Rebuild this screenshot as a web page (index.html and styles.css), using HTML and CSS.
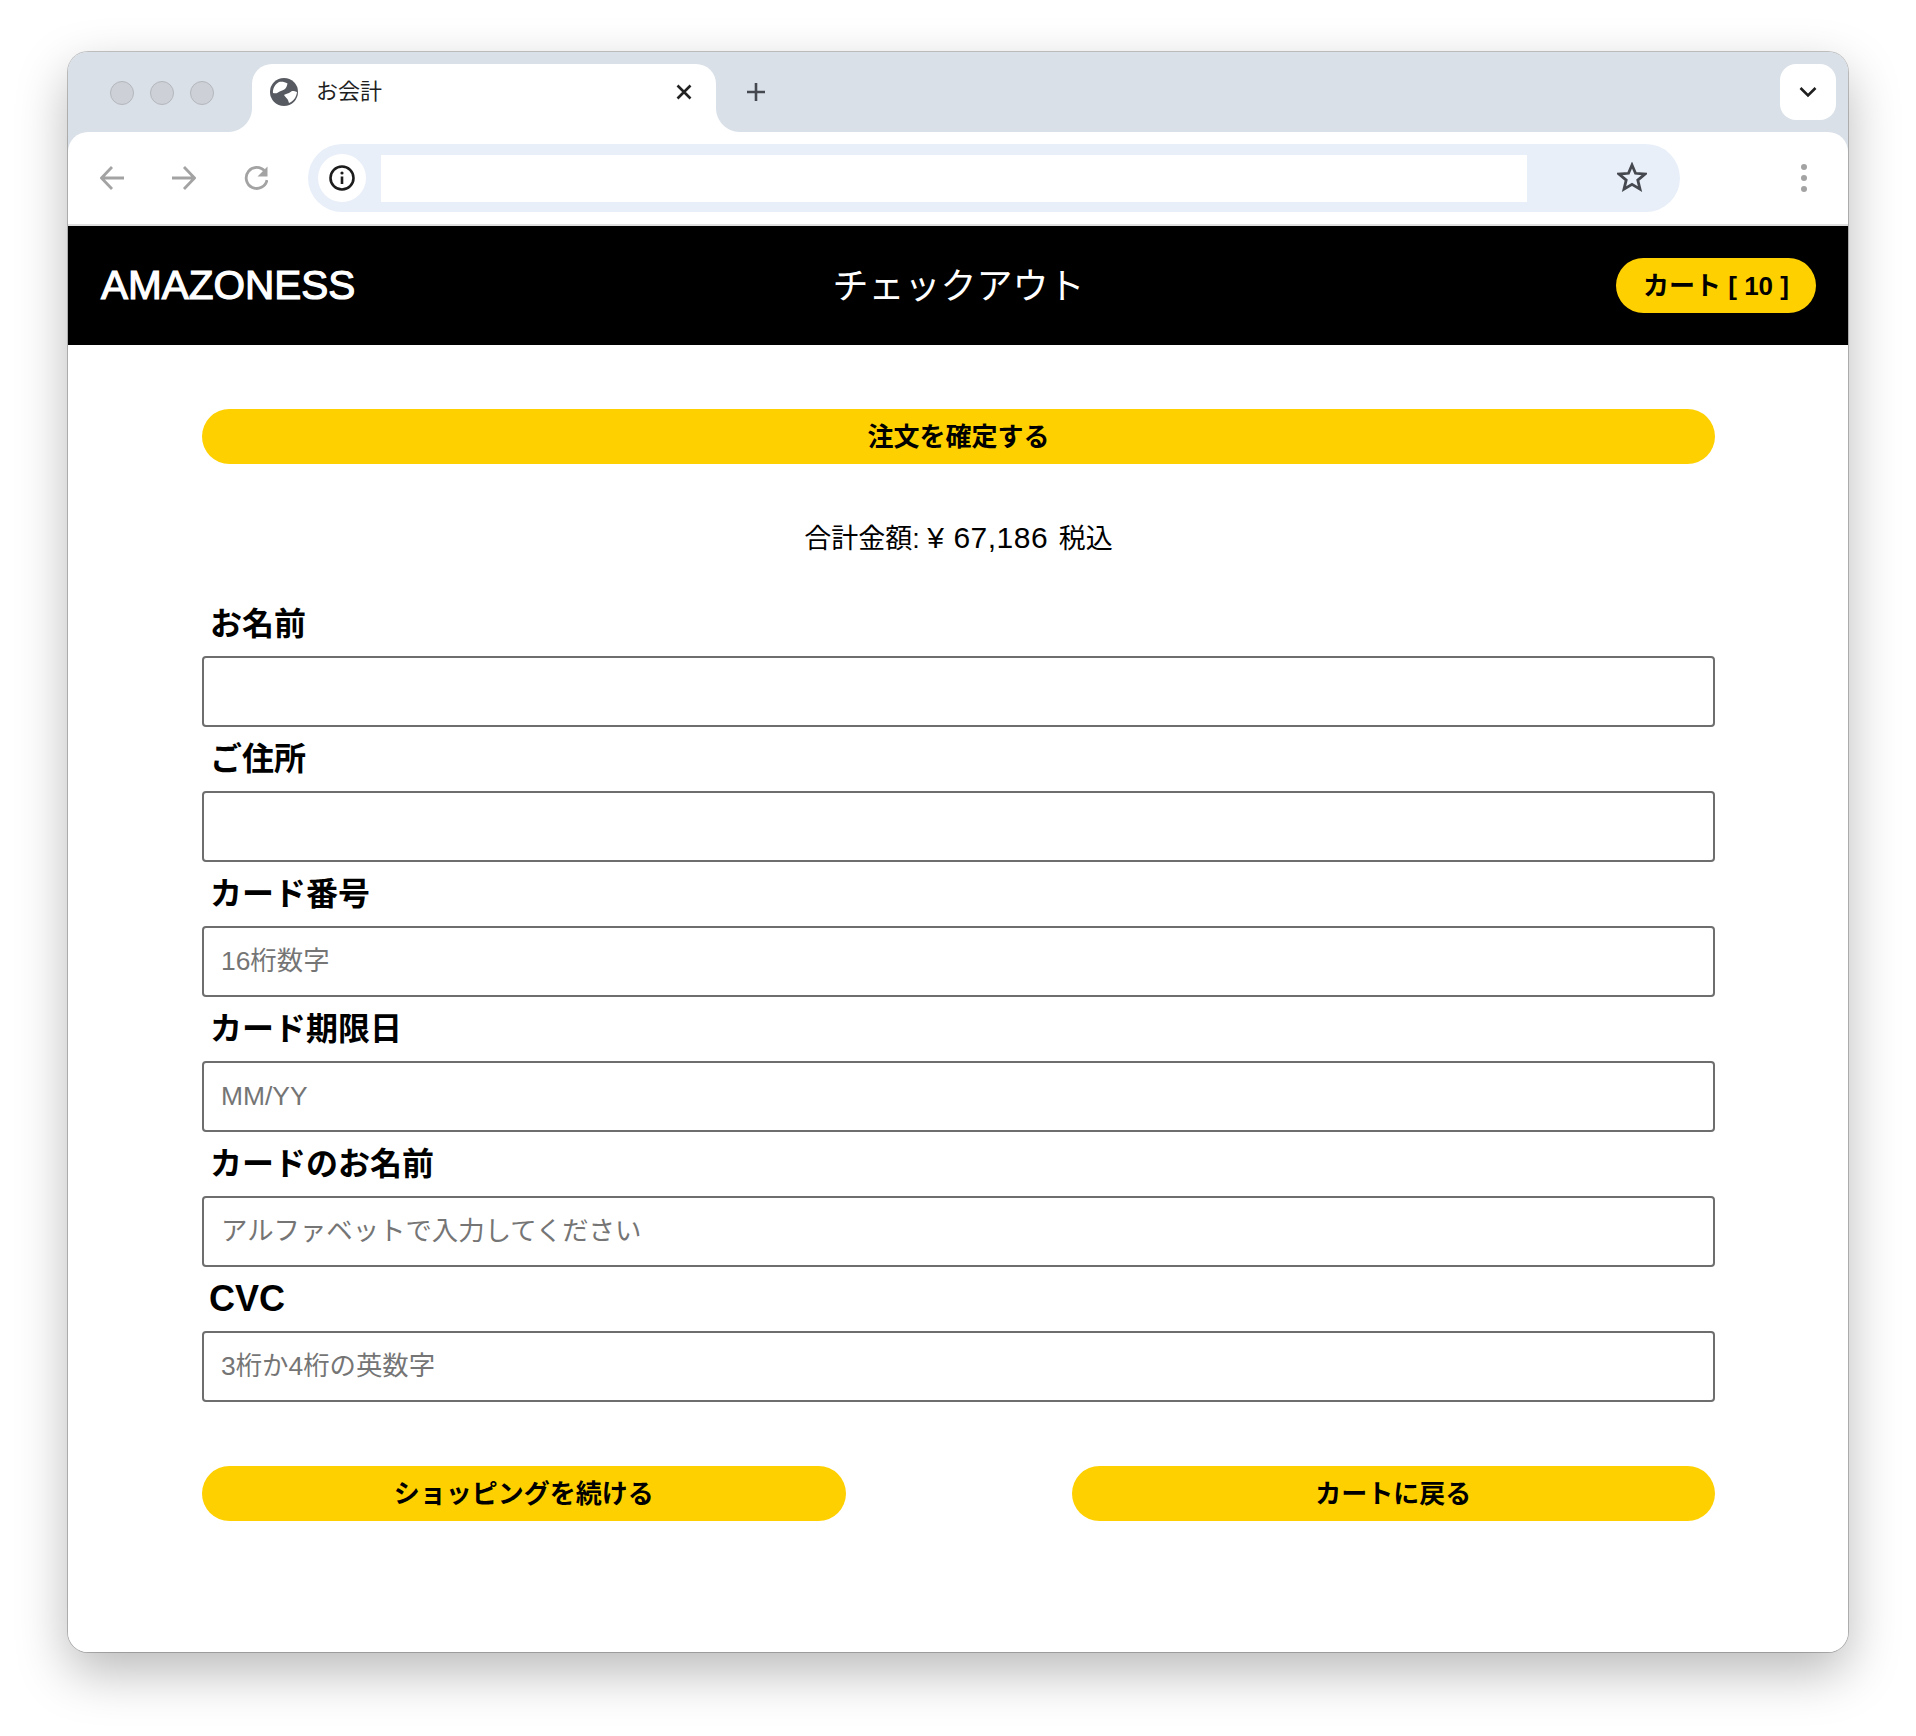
FILE: index.html
```html
<!DOCTYPE html>
<html lang="ja">
<head>
<meta charset="utf-8">
<title>お会計</title>
<link rel="stylesheet" href="styles.css">
</head>
<body>
<div class="window">
  <div class="tabbar">
    <div class="lights"><i></i><i></i><i></i></div>
    <div class="tab">
      <svg class="globe" viewBox="0 0 28 28"><circle cx="14" cy="14" r="14" fill="#575b61"/><path d="M9 4c3-.5 6 0 8.500 1.500-.5 2-1 4-2.500 5.500-2 2-5 1.500-7 3.500-1.500 1-3.500 1-5 .5-.5-4 2-9 6-11zM22 13c2 0 4 .5 5 1-.5 5-3.500 9-8 11l-1-3c-1-2-3-3-4-5 1-1 3-1 5-2z" fill="#fff"/></svg>
      <span class="tab-title">お会計</span>
      <svg class="tab-close" viewBox="0 0 18 18"><path d="M2.500 2.500l13 13M15.500 2.500l-13 13" stroke="#222" stroke-width="2.600" fill="none"/></svg>
    </div>
    <svg class="plus" viewBox="0 0 20 20"><path d="M10 1v18M1 10h18" stroke="#45494f" stroke-width="2.600" fill="none"/></svg>
    <div class="tab-menu"><svg viewBox="0 0 18 12"><path d="M1.500 2L9 9.500 16.500 2" stroke="#1f1f1f" stroke-width="2.600" fill="none"/></svg></div>
  </div>
  <div class="toolbar">
    <svg class="nav" viewBox="0 0 24 24"><path d="M24 12H2M12 1L1.500 12 12 23" stroke="#a3a3a3" stroke-width="2.800" fill="none"/></svg>
    <svg class="nav" viewBox="0 0 24 24"><path d="M0 12h22M12 1l10.500 11L12 23" stroke="#a3a3a3" stroke-width="2.800" fill="none"/></svg>
    <svg class="nav" viewBox="0 0 24 24"><path d="M21 5.500A10.500 10.500 0 1 0 23 14" stroke="#a3a3a3" stroke-width="2.800" fill="none"/><path d="M23.500 .5v10h-10z" fill="#a3a3a3"/></svg>
    <div class="omnibox">
      <div class="info"><svg viewBox="0 0 26 26"><circle cx="13" cy="13" r="11.500" fill="none" stroke="#1c1c1c" stroke-width="2.600"/><circle cx="13" cy="8" r="1.600" fill="#1c1c1c"/><path d="M13 11.500V19" stroke="#1c1c1c" stroke-width="2.600"/></svg></div>
      <div class="url"></div>
      <svg class="star" viewBox="0 0 30 30"><path d="M15 3l3.500 8.300 9.500.8-7.200 6 2.200 9L15 22.300 7 27.100l2.200-9-7.200-6 9.500-.8z" fill="none" stroke="#45494f" stroke-width="2.800"/></svg>
    </div>
    <div class="dots"><i></i><i></i><i></i></div>
  </div>
  <header class="site-header">
    <div class="logo">AMAZONESS</div>
    <h1 class="page-title">チェックアウト</h1>
    <a class="cart pill">カート [ 10 ]</a>
  </header>
  <main class="content">
    <button class="pill wide" type="button">注文を確定する</button>
    <p class="total">合計金額: <span class="amount">¥ 67,186</span> 税込</p>
    <form class="form">
      <label class="label" for="f1">お名前</label>
      <input class="field" id="f1" type="text">
      <label class="label" for="f2">ご住所</label>
      <input class="field" id="f2" type="text">
      <label class="label" for="f3">カード番号</label>
      <input class="field" id="f3" type="text" placeholder="16桁数字">
      <label class="label" for="f4">カード期限日</label>
      <input class="field" id="f4" type="text" placeholder="MM/YY">
      <label class="label" for="f5">カードのお名前</label>
      <input class="field" id="f5" type="text" placeholder="アルファベットで入力してください">
      <label class="label label-latin" for="f6">CVC</label>
      <input class="field" id="f6" type="text" placeholder="3桁か4桁の英数字">
    </form>
    <div class="actions">
      <button class="pill half" type="button">ショッピングを続ける</button>
      <button class="pill half" type="button">カートに戻る</button>
    </div>
  </main>
</div>
</body>
</html>
```
FILE: styles.css
```css
* { box-sizing: border-box; }
html, body { margin: 0; padding: 0; background: #fff; }
body {
  width: 1916px; height: 1736px; overflow: hidden;
  padding: 52px 68px 0;
  font-family: "Liberation Sans", "Noto Sans CJK JP", sans-serif;
  color: #000;
}
.window {
  width: 1780px; height: 1600px;
  border-radius: 20px;
  background: linear-gradient(#d9e0e8 100px, #fff 100px);
  box-shadow: 0 0 0 1px rgba(0,0,0,.22), 0 20px 52px rgba(0,0,0,.28);
  overflow: hidden;
  display: flex; flex-direction: column;
}
.tabbar {
  height: 80px; flex: none;
  background: #d9e0e8;
  display: flex; align-items: flex-start;
  padding-top: 12px;
}
.lights { width: 184px; padding: 17px 0 0 42px; display: flex; gap: 16px; flex: none; }
.lights i {
  width: 24px; height: 24px; border-radius: 50%;
  background: #cdd1d7; border: 1px solid #b4b7bc; display: block;
}
.tab {
  width: 464px; height: 68px; flex: none;
  background: #fff;
  border-radius: 20px 20px 0 0;
  display: flex; align-items: flex-start;
  padding: 14px 0 0 18px;
  position: relative;
}
.tab::before, .tab::after {
  content: ""; position: absolute; bottom: 0; width: 24px; height: 24px;
}
.tab::before { left: -24px; background: radial-gradient(circle at 0 0, #d9e0e8 23.500px, #fff 24.500px); }
.tab::after { right: -24px; background: radial-gradient(circle at 100% 0, #d9e0e8 23.500px, #fff 24.500px); }
.globe { width: 28px; height: 28px; flex: none; }
.tab-title { margin-left: 18px; font-size: 22px; line-height: 28px; color: #1f1f1f; }
.tab-close { width: 18px; height: 18px; margin-left: auto; margin-right: 23px; margin-top: 5px; }
.plus { width: 20px; height: 20px; margin: 18px 0 0 30px; flex: none; }
.tab-menu {
  width: 56px; height: 56px; margin-left: auto; margin-right: 12px;
  background: #fff; border-radius: 16px;
  display: flex; align-items: center; justify-content: center;
}
.tab-menu svg { width: 18px; height: 12px; margin-top: -1px; }
.toolbar {
  height: 94px; flex: none;
  background: #fff;
  border-radius: 20px 20px 0 0;
  border-bottom: 2px solid #dedede;
  display: flex; align-items: flex-start;
  padding: 12px 0 0 32px;
}
.nav { width: 24px; height: 24px; margin: 22px 48px 0 0; flex: none; }
.omnibox {
  width: 1372px; height: 68px; margin-left: -8px;
  border-radius: 34px;
  background: #e8eff9;
  display: flex; align-items: flex-start;
  padding: 10px 0 0 10px;
  flex: none;
}
.info {
  width: 48px; height: 48px; border-radius: 50%; background: #fff;
  display: flex; align-items: center; justify-content: center; flex: none;
}
.info svg { width: 26px; height: 26px; }
.url { width: 1146px; height: 47px; background: #fff; margin: 1px 0 0 15px; flex: none; }
.star { width: 30px; height: 30px; margin: 8px 0 0 90px; flex: none; }
.dots { display: flex; flex-direction: column; gap: 5px; margin: 20px 0 0 121px; }
.dots i { width: 6px; height: 6px; border-radius: 50%; background: #a3a3a3; display: block; }
.site-header {
  height: 119px; flex: none;
  background: #000; color: #fff;
  display: grid; grid-template-columns: 1fr auto 1fr; align-items: center;
  padding: 0 32px 0 33px;
}
.logo { font-size: 40.500px; font-weight: 400; -webkit-text-stroke: 1.200px #fff; }
.page-title { margin: 0 0 5px; font-size: 36px; font-weight: 400; }
.pill {
  background: #ffd000; color: #000; border: 0; border-radius: 28px;
  height: 55px;
  font-family: inherit; font-weight: 700; font-size: 26px;
  display: flex; align-items: center; justify-content: center;
  padding: 0 0 4px;
}
.cart { width: 200px; justify-self: end; }
.content { padding: 64px 133px 0 134px; display: flex; flex-direction: column; }
.wide { width: 100%; flex: none; }
.total { margin: 57px 0 35px; height: 36px; font-size: 27px; line-height: 36px; text-align: center; }
.amount { font-size: 30px; line-height: 1; letter-spacing: .5px; margin-right: 3px; }
.form { display: flex; flex-direction: column; }
.label {
  height: 64px; padding: 14px 0 0 8px;
  font-size: 32px; line-height: 36px; font-weight: 700;
}
.label-latin { font-size: 36px; padding-left: 7px; }
.field {
  height: 71px; width: 100%;
  border: 2px solid #6e6e6e; border-radius: 4px;
  padding: 0 17px;
  font-family: inherit; font-size: 26.400px; background: #fff;
}
.field::placeholder { color: #757575; opacity: 1; }
.actions { display: flex; justify-content: space-between; margin-top: 64px; }
.half { width: 643.500px; }
```
